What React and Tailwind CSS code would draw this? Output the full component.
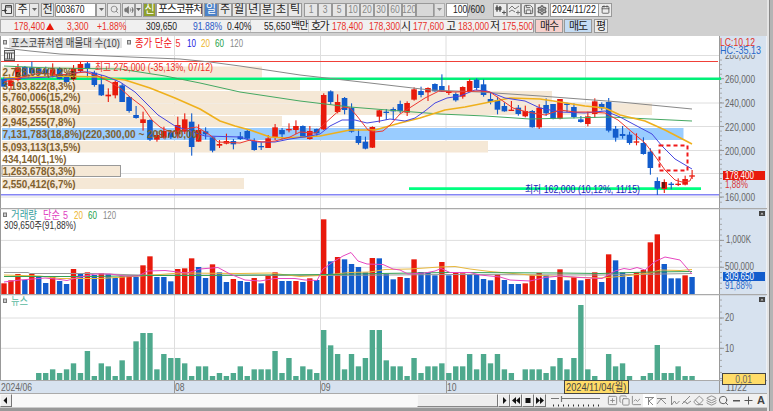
import { Search, Volume2, Settings, Save, Calendar, Copy, Layers, Eraser, SquarePlus, ChartLine } from "lucide-react";

const RED = "#e81a0c";
const BLUE = "#125ccc";
const GRID = "#dedede";

const barX = (i) => 4 + i * 6.95;

// [color, high, body top, body bottom, low] in thirds of a pixel below y=60
const candles = [
  ["b", 50, 57, 80, 80], ["r", 57, 62, 78, 90], ["r", 12, 22, 60, 64], ["b", 18, 21, 50, 55], ["b", 5, 22, 40, 42],
  ["b", 22, 25, 40, 45], ["b", 20, 28, 42, 45], ["r", 10, 28, 48, 52], ["b", 22, 25, 57, 58], ["b", 40, 45, 66, 68],
  ["r", 15, 24, 58, 62], ["r", 6, 12, 33, 36], ["b", 6, 10, 25, 52], ["b", 32, 38, 75, 80], ["b", 45, 73, 106, 108],
  ["r", 85, 104, 109, 126], ["r", 62, 66, 106, 115], ["b", 70, 76, 126, 126], ["b", 108, 111, 153, 158], ["b", 138, 165, 174, 176],
  ["r", 155, 178, 189, 212], ["b", 178, 180, 239, 243], ["r", 213, 225, 239, 245], ["r", 200, 213, 233, 236], ["b", 212, 217, 232, 237],
  ["r", 170, 195, 223, 235], ["r", 160, 178, 215, 222], ["b", 160, 185, 261, 287], ["r", 193, 210, 245, 245], ["b", 202, 214, 223, 238],
  ["b", 230, 232, 272, 277], ["r", 240, 252, 257, 264], ["r", 221, 243, 251, 253], ["b", 237, 243, 253, 268], ["b", 216, 229, 237, 240],
  ["b", 208, 213, 236, 240], ["b", 235, 243, 270, 272], ["b", 247, 258, 262, 270], ["r", 225, 235, 264, 264], ["r", 192, 202, 231, 240],
  ["b", 204, 210, 223, 238], ["r", 190, 207, 211, 217], ["r", 181, 198, 210, 222], ["b", 196, 198, 233, 233], ["r", 198, 213, 237, 239],
  ["b", 206, 207, 220, 228], ["r", 100, 105, 208, 210], ["b", 91, 94, 126, 134], ["r", 103, 126, 156, 160], ["b", 111, 114, 150, 163],
  ["b", 130, 143, 215, 218], ["b", 207, 228, 249, 254], ["b", 230, 245, 266, 268], ["r", 199, 201, 263, 264], ["r", 150, 151, 170, 188],
  ["b", 147, 155, 159, 180], ["b", 142, 147, 154, 180], ["b", 122, 132, 153, 160], ["r", 124, 129, 158, 168], ["r", 82, 88, 119, 122],
  ["b", 80, 93, 105, 112], ["r", 82, 84, 97, 123], ["b", 70, 72, 94, 95], ["b", 43, 78, 95, 96], ["r", 76, 95, 99, 105],
  ["b", 97, 102, 121, 125], ["r", 79, 81, 110, 116], ["r", 57, 63, 93, 95], ["b", 55, 59, 84, 90], ["b", 58, 73, 105, 110],
  ["b", 99, 117, 126, 133], ["b", 110, 120, 149, 163], ["b", 127, 138, 154, 155], ["r", 123, 149, 153, 153], ["b", 135, 143, 162, 167],
  ["r", 137, 153, 169, 172], ["b", 150, 153, 202, 203], ["r", 133, 143, 202, 207], ["b", 115, 135, 160, 168], ["b", 132, 132, 177, 178],
  ["r", 117, 117, 176, 178], ["b", 128, 131, 135, 156], ["b", 130, 141, 171, 175], ["b", 168, 178, 186, 188], ["r", 155, 169, 192, 199],
  ["r", 115, 124, 162, 173], ["b", 127, 132, 145, 151], ["b", 114, 126, 212, 217], ["b", 198, 207, 233, 245], ["b", 198, 222, 228, 236],
  ["b", 215, 224, 249, 254], ["r", 220, 244, 248, 256], ["b", 232, 249, 282, 284], ["b", 265, 275, 324, 344], ["b", 352, 363, 386, 405],
  ["r", 358, 366, 387, 399], ["b", 366, 371, 375, 388], ["r", 355, 371, 375, 378], ["r", 347, 357, 374, 376], ["r", 330, 346, 350, 357],
];

// bar tops in thirds of a pixel below y=200
const volume = [
  250, 241, 222, 240, 222, 231, 249, 231, 243, 252, 207, 222, 217, 225, 220, 222, 234, 229, 228, 231,
  196, 169, 231, 231, 244, 207, 205, 175, 201, 234, 193, 217, 246, 237, 243, 246, 234, 250, 227, 217,
  243, 243, 243, 246, 235, 240, 58, 184, 171, 178, 192, 201, 217, 174, 175, 222, 238, 231, 234, 178,
  216, 217, 226, 186, 226, 217, 220, 222, 222, 237, 241, 223, 240, 252, 252, 250, 226, 219, 226, 240,
  208, 241, 231, 241, 237, 217, 246, 163, 181, 217, 231, 217, 210, 127, 103, 192, 235, 235, 226, 231,
];
const volumeColors =
  "rrrbrbbrbbrbrbrbbrrbrrbbbrrrbbrbbrbbrbrrbbrbrbrbrbbbbrbbbrbrbbbrbrrbbbbrbbbrrrbbrbrbrrbrbbbrrrrbbbrb";

// bar tops in thirds of a pixel below y=300, 239 = no news
const news = [
  239, 239, 239, 239, 239, 219, 219, 208, 219, 208, 190, 219, 153, 228, 190, 199, 228, 181, 228, 124,
  99, 99, 208, 162, 174, 174, 190, 228, 199, 199, 228, 219, 228, 219, 199, 228, 208, 208, 208, 153,
  219, 174, 228, 199, 208, 219, 90, 136, 162, 208, 162, 199, 174, 90, 90, 181, 199, 199, 228, 174,
  219, 199, 199, 190, 219, 199, 199, 162, 208, 162, 190, 162, 208, 219, 239, 208, 208, 208, 219, 199,
  174, 208, 174, 15, 208, 228, 239, 162, 199, 190, 228, 239, 228, 219, 135, 219, 219, 199, 228, 228,
];

const profile = [
  { y: 66.5, h: 11, w: 260, fill: "#f5e8d6", label: "2,728,054(7,2%)", tw: 73 },
  { y: 80, h: 10, w: 298, fill: "#f5e8d6", label: "3,193,822(8,3%)", tw: 73 },
  { y: 91, h: 12, w: 550, fill: "#f5e8d6", label: "5,760,006(15,2%)", tw: 78 },
  { y: 103.5, h: 11.5, w: 650, fill: "#f5e8d6", label: "6,802,555(18,0%)", tw: 78 },
  { y: 116, h: 11, w: 280, fill: "#f5e8d6", label: "2,945,255(7,8%)", tw: 73 },
  { y: 128, h: 12, w: 681.5, fill: "#99ccff", label: "7,131,783(18,8%)(220,300,00 ~ 209,700,00)", tw: 198 },
  { y: 141, h: 11.5, w: 486, fill: "#f5e8d6", label: "5,093,113(13,5%)", tw: 78 },
  { y: 153, h: 11, w: 0, fill: "none", label: "434,140(1,1%)", tw: 64 },
  { y: 165.5, h: 11, w: 118.5, fill: "#f5e8d6", stroke: "#999", label: "1,263,678(3,3%)", tw: 73 },
  { y: 178, h: 11, w: 242, fill: "#f5e8d6", label: "2,550,412(6,7%)", tw: 73 },
];

const monthLines = [174.5, 320.5, 446, 585.5];

function Label({ x, y, w, fill = "#666", size = 11, bold, children }) {
  return (
    <text
      x={x}
      y={y}
      fill={fill}
      fontSize={size}
      fontWeight={bold ? 700 : 400}
      textLength={w}
      lengthAdjust="spacingAndGlyphs"
      style={{ whiteSpace: "pre" }}
    >
      {children}
    </text>
  );
}

function Line({ points, color, width = 1 }) {
  return <polyline points={points} fill="none" stroke={color} strokeWidth={width} strokeLinejoin="round" />;
}

function Marker({ x, y }) {
  return <rect x={x} y={y} width="3" height="3.5" fill="#ccc" stroke="#777" strokeWidth="1" />;
}

function Frame({ top, height }) {
  const bottom = top + height;
  return (
    <>
      <rect x="0" y={top} width="767" height={height} fill="#fff" />
      {monthLines.map((x) => (
        <line key={x} x1={x} x2={x} y1={top} y2={bottom} stroke={GRID} />
      ))}
      <rect x="719.5" y={top} width="47" height={height} fill="#d7e2ef" />
      <line x1="719.5" x2="719.5" y1={top} y2={bottom} stroke="#999" />
      <line x1="0.5" x2="0.5" y1={top} y2={bottom} stroke="#999" />
    </>
  );
}

function Ticks({ from, to, step }) {
  const ys = [];
  for (let y = from; y < to; y += step) ys.push(y);
  return ys.map((y) => <line key={y} x1="720" x2="722" y1={y} y2={y} stroke="#999" strokeWidth="0.8" />);
}

function PaneButton({ y }) {
  return (
    <g>
      <rect x="759" y={y} width="6" height="5" fill="#444" />
      <path d={`M760.5 ${y + 3.5}h3l-1.5-2z`} fill="#ccc" />
    </g>
  );
}

function PricePane() {
  const levels = [
    [78.7, "260,000"],
    [103, "240,000"],
    [126.5, "220,000"],
    [150.5, "200,000"],
    [173.5, "180,000"],
    [197, "160,000"],
  ];
  return (
    <svg className="block" width="767" height="172" viewBox="0 36 767 172">
      <Frame top={36} height={172} />
      <line x1="1" x2="719" y1="55.5" y2="55.5" stroke={GRID} />
      {levels.map(([y]) => (
        <line key={y} x1="1" x2="719" y1={y} y2={y} stroke={GRID} />
      ))}
      {profile.map((row) => (
        <rect key={row.y} x="2" y={row.y} width={row.w} height={row.h} fill={row.fill} stroke={row.stroke} />
      ))}
      <line x1="1" x2="718" y1="61.5" y2="61.5" stroke="#f04038" />
      <line x1="1" x2="721" y1="78.7" y2="78.7" stroke="#00f078" strokeWidth="2.6" />
      <line x1="409" x2="701" y1="188.6" y2="188.6" stroke="#00ff80" strokeWidth="2.6" />
      <line x1="1" x2="719" y1="194.8" y2="194.8" stroke="#8585f5" strokeWidth="1.5" />

      {candles.map(([c, high, top, bottom, low], i) => {
        const x = barX(i);
        const fill = c === "r" ? RED : BLUE;
        return (
          <g key={i} fill={fill}>
            <rect x={x - 0.5} y={60 + high / 3} width="1.1" height={(low - high) / 3} />
            <rect x={x - 2.8} y={60 + top / 3} width="5.6" height={Math.max(1.2, (bottom - top) / 3)} />
          </g>
        );
      })}
      <path d="M16 72h4v7h-4zM71 71h4v8h-4zM662 182h3v6h-3z" fill="#3a1410" opacity="0.75" />

      <Line color="#888" points="4,48 30,51 60,54 130,57 180,59 210,62 240,66 300,75 370,83 430,90 480,92 540,96 620,102 692,109" />
      <Line color="#45a862" points="4,66 50,68 120,69 165,76 200,83 240,92 300,101 350,107 400,111 440,114 485,116 530,119 570,118 610,117 650,119 692,121" />
      <Line color="#efb01c" width={1.6} points="4,78 60,76 100,77 125,80 150,88 175,98 200,109 220,121 235,126 250,130 270,137 285,138 320,136 350,130 375,130 400,123 420,118 445,110 465,107 480,104 510,98 540,99 560,102 585,106 605,108 620,115 645,121 665,130 692,144" />
      <Line color="#4646e0" points="4,79 50,77 80,72 90,72 105,76 120,82 135,92 145,102 158,115 175,126 190,131 205,136 240,137 255,142 275,142 290,139 310,136 320,134 330,126 342,120 355,120 367,123 380,121 390,119 405,121 415,118 425,111 435,103 447,98 460,96 475,90 487,91 505,98 525,101 540,108 560,112 585,113 605,111 620,117 635,125 652,134 662,146 675,159 692,169" />
      <Line color="#ee3830" points="4,82 18,78 40,73 60,75 85,72 98,76 110,82 120,88 130,97 143,107 152,120 160,127 170,132 180,131 190,128 197,127 210,135 218,142 240,143 250,140 262,142 275,141 290,137 300,132 316,133 322,126 333,116 343,107 350,108 357,116 368,130 375,132 383,131 390,125 400,114 411,107 425,98 439,91 455,92 480,91 490,92 500,99 513,108 527,112 545,115 560,110 575,112 590,112 605,113 618,120 632,132 645,143 655,156 665,170 675,180 682,182 690,181 692,176" />
      <rect x="659.5" y="145.5" width="28" height="25" fill="none" stroke="#f01818" strokeWidth="2" strokeDasharray="4 3" />

      {profile.map((row) => (
        <Label key={row.label} x={2.5} y={row.y + 9.5} w={row.tw} fill="#80602e" size={10.5} bold>
          {row.label}
        </Label>
      ))}

      <Label x={95} y={71} w={118} fill="#ee2a22" size={10.5}>최고 275,000 (-35,13%, 07/12)</Label>
      <Label x={525} y={192.5} w={115} fill="#1a1ab8" size={10.5}>최저 162,000 (10,12%, 11/15)</Label>

      <Marker x={3.5} y={40.5} />
      <rect x="9" y="38" width="113" height="10" fill="#e2e2e2" />
      <Label x={11} y={46.5} w={109} fill="#444">포스코퓨처엠 매물대 수(10)</Label>
      <Marker x={127.5} y={40.5} />
      <Label x={135} y={46.5} w={37} fill="#f01010">종가 단순</Label>
      <Label x={175.5} y={46.5} w={5} fill="#f03030">5</Label>
      <Label x={187} y={46.5} w={9} fill="#2020e0">10</Label>
      <Label x={201} y={46.5} w={9} fill="#eeb52a">20</Label>
      <Label x={215} y={46.5} w={9} fill="#22a048">60</Label>
      <Label x={230} y={46.5} w={13} fill="#888">120</Label>
      <g stroke="#555" fill="#e8e8e8">
        <rect x="4.5" y="50.5" width="10" height="10" />
        <path d="M5 53h9M7.5 53v6M9.5 53v6M11.5 53v6M5 59h9" fill="none" />
      </g>

      <Ticks from={60} to={206} step={4.74} />
      <Label x={725} y={59} w={30}>280,000</Label>
      {levels.map(([y, text]) => (
        <g key={text}>
          <line x1="720" x2="724" y1={y} y2={y} stroke="#999" />
          <Label x={725} y={y + 4} w={30}>{text}</Label>
        </g>
      ))}
      <line x1="719" x2="721" y1="78.7" y2="78.7" stroke="#00f078" strokeWidth="2.6" />
      <rect x="720" y="37" width="46" height="18" fill="#d7e2ef" />
      <Label x={720} y={45.5} w={35} fill="#e03028" size={10.5}>LC:10,12</Label>
      <Label x={720} y={54} w={41} fill="#2868c8" size={10.5}>HC:-35,13</Label>
      <rect x="723" y="171" width="42" height="9" fill={RED} />
      <Label x={725} y={179} w={29} fill="#fff" size={10.5}>178,400</Label>
      <Label x={725} y={188} w={23} fill="#d83838" size={10.5}>1,88%</Label>
    </svg>
  );
}

function VolumePane() {
  return (
    <svg className="block" width="767" height="86" viewBox="0 208 767 86">
      <Frame top={208} height={86} />
      <line x1="0" x2="767" y1="208.7" y2="208.7" stroke="#aaa" strokeWidth="1.3" />
      <line x1="1" x2="719" y1="240.4" y2="240.4" stroke={GRID} />
      <line x1="1" x2="719" y1="267.3" y2="267.3" stroke={GRID} />
      {volume.map((v, i) => (
        <rect
          key={i}
          x={barX(i) - 2.7}
          y={200 + v / 3}
          width="5.4"
          height={94 - v / 3}
          fill={volumeColors[i] === "r" ? RED : BLUE}
        />
      ))}
      <Line color="#999" points="4,272.5 28,272.5 30,273.5 90,273.5 140,275 320,275.5 450,274.5 600,275 692,273.5" />
      <Line color="#e8b83c" points="4,275 40,276 60,278.5 100,278.5 140,276 180,273 240,273.5 270,273 300,276.5 320,275.5 350,272.5 370,272 385,269.5 410,269 440,267 455,266.5 470,269 490,271.5 530,275 570,277 600,278 620,276.5 650,273 660,270 680,270.5 692,269.5" />
      <Line color="#35a055" points="4,276.5 90,276.5 150,275.5 200,275.5 260,275 330,274.5 380,273.5 450,272.5 560,273 600,273.5 650,272 692,271.5" />
      <Line color="#e648c0" points="4,282 20,280 45,278 60,279.5 67,280.5 80,277 95,274 110,274 125,276 138,276 148,271 165,270.5 178,272 187,273 200,269 218,267.5 230,274 245,280 260,281 275,278.5 295,278.5 305,280 317,280.5 323,269 333,262 343,256 351,252.5 358,261 367,264 383,264.5 393,269 400,270 408,274 425,273 435,271 441,268.5 450,272.5 470,272.5 480,275 500,277 510,280 530,281 545,277.5 560,276 580,277.5 602,278.5 615,271 624,268.5 630,269.5 637,267.5 645,270 655,261.5 665,257 680,260 692,274" />

      <Marker x={3.5} y={213} />
      <Label x={11} y={219} w={26} fill="#38a0a0">거래량</Label>
      <Label x={43} y={219} w={17} fill="#e040c0">단순</Label>
      <Label x={63} y={219} w={5} fill="#e040c0">5</Label>
      <Label x={74} y={219} w={9} fill="#eeb52a">20</Label>
      <Label x={88} y={219} w={9} fill="#22a048">60</Label>
      <Label x={103} y={219} w={13} fill="#888">120</Label>
      <Label x={4} y={228.5} w={72} fill="#333" size={10.5}>309,650주(91,88%)</Label>

      <Ticks from={219} to={293} step={5.35} />
      <line x1="720" x2="724" y1="240.4" y2="240.4" stroke="#999" />
      <line x1="720" x2="724" y1="267.3" y2="267.3" stroke="#999" />
      <Label x={726} y={243} w={25}>1,000K</Label>
      <Label x={725} y={270} w={29}>500,000</Label>
      <rect x="723" y="272" width="42" height="9" fill={BLUE} />
      <Label x={725} y={280} w={29} fill="#fff" size={10.5}>309,650</Label>
      <Label x={725} y={289} w={27} fill="#2868c8" size={10.5}>91,88%</Label>
      <PaneButton y={211} />
    </svg>
  );
}

function NewsPane() {
  return (
    <svg className="block" width="767" height="86" viewBox="0 294 767 86">
      <Frame top={294} height={86} />
      <line x1="0" x2="767" y1="294.5" y2="294.5" stroke="#aaa" strokeWidth="1.3" />
      <line x1="1" x2="719" y1="318" y2="318" stroke={GRID} />
      <line x1="1" x2="719" y1="348.3" y2="348.3" stroke={GRID} />
      {news.map((v, i) =>
        v < 239 ? (
          <rect key={i} x={barX(i) - 2.7} y={300 + v / 3} width="5.4" height={80 - v / 3} fill="#4ea98d" />
        ) : null
      )}
      <Marker x={3.5} y={299} />
      <Label x={11} y={305} w={17} fill="#58b8a0">뉴스</Label>
      <Ticks from={300} to={379} step={6.04} />
      <line x1="720" x2="724" y1="318" y2="318" stroke="#999" />
      <line x1="720" x2="724" y1="348.3" y2="348.3" stroke="#999" />
      <Label x={725} y={321} w={9}>20</Label>
      <Label x={725} y={352} w={9}>10</Label>
      <PaneButton y={297} />
    </svg>
  );
}

// Condensed text in a fixed-width slot
function Cond({ className = "", children }) {
  return (
    <span className={`block shrink-0 whitespace-nowrap ${className}`}>
      <span className="inline-block origin-left scale-x-[.78]">{children}</span>
    </span>
  );
}

function Key({ className = "", children }) {
  return (
    <span className={`flex h-[14px] shrink-0 items-center justify-center border border-[#999] text-[11px] leading-none ${className}`}>
      {children}
    </span>
  );
}

function Caret({ className = "" }) {
  return (
    <Key className={`bg-[#e9e9e9] ${className}`}>
      <svg width="5" height="3" viewBox="0 0 5 3"><path d="M0 0h5L2.5 3z" fill="#666" /></svg>
    </Key>
  );
}

function Toolbar() {
  return (
    <div className="flex h-[19px] items-center pl-px text-[#222]">
      <Key className="w-[13px] bg-[#e9e9e9]">
        <svg width="11" height="11" viewBox="0 0 11 11" fill="none" stroke="#444">
          <path d="M3.5 1.5h6v8h-6zM3.5 3h6" /><path d="M0 6.5h3" /><path d="M2.5 4.5v4l2.5-2z" fill="#333" stroke="none" />
        </svg>
      </Key>
      <Key className="ml-px w-[14px] border-r-0 bg-[#f4f4f4]">주</Key>
      <Caret className="w-[10px]" />
      <Key className="ml-[2px] w-[13px] bg-[#e9e9e9]">전</Key>
      <Key className="ml-px w-[41px] justify-start! bg-white">
        <Cond className="w-[28px]">003670</Cond>
      </Key>
      <Caret className="w-[10px]" />
      <Key className="ml-px w-[14px] bg-[#e9e9e9]"><Search size={9} color="#777" /></Key>
      <Key className="ml-px w-[13px] bg-[#e9e9e9]"><Volume2 size={10} color="#777" fill="#777" /></Key>
      <Caret className="w-[7px]" />
      <Key className="ml-px w-[13px] bg-[#8fa02c] text-white">신</Key>
      <Key className="w-[47px] justify-start! overflow-hidden bg-white">
        <span className="whitespace-nowrap pl-px tracking-[-1.3px]">포스코퓨처</span>
      </Key>
      <Key className="ml-px w-[14px] bg-[#4c82c8] text-white">일</Key>
      {["주", "월", "년", "분", "초", "틱"].map((t) => (
        <Key key={t} className="w-[14px] bg-[#e9e9e9]">{t}</Key>
      ))}
      <div className="ml-[2px] flex text-[#888]">
        {["1", "3", "5", "10", "20", "30", "60", "120"].map((t) => (
          <Key key={t} className="w-[14px] bg-[#e6e6e6]">
            <span className="inline-block scale-x-[.78]">{t}</span>
          </Key>
        ))}
      </div>
      <Key className="w-[18px] bg-[#d8d8d8]" />
      <Caret className="w-[11px] opacity-60" />
      <Key className="ml-px w-[22px] justify-end! bg-white"><span className="inline-block origin-right scale-x-[.78]">100</span></Key>
      <Cond className="w-[25px] text-[11px] leading-none">/600</Cond>
      <Key className="w-[14px] bg-[#ececec]">
        <svg width="11" height="11" viewBox="0 0 11 11" stroke="#555"><path d="M2 1v7M5 2v6M7 8.5h4M9 6.5v4" /><path d="M1 3h2v3H1zM4 3h2v3H4z" fill="#555" /></svg>
      </Key>
      <Key className="w-[14px] bg-[#ececec]">
        <svg width="11" height="11" viewBox="0 0 11 11" fill="none" stroke="#777"><path d="M0 5l3-3 3 3 4-3M0 8l3-2 3 2M7 8.5h4M9 6.5v4" /></svg>
      </Key>
      <Key className="w-[14px] bg-[#ececec]"><Save size={11} color="#555" /></Key>
      <Key className="w-[14px] bg-[#ececec]"><Settings size={10} color="#666" strokeWidth={3.5} /></Key>
      <Key className="ml-px w-[49px] justify-start! bg-white pl-px">
        <span className="inline-block origin-left scale-x-[.81] whitespace-nowrap">2024/11/22</span>
      </Key>
      <Key className="w-[13px] border-l-0 bg-[#ececec]"><Calendar size={9} color="#444" /></Key>
    </div>
  );
}

function QuoteBar() {
  return (
    <div className="flex h-[14px] w-[608px] items-center border border-r-0 border-[#aaa] bg-[#f0f0f0] text-[11px] leading-none text-[#222]">
      <div className="flex h-full w-[125px] items-center border-r border-[#ccc] pl-[13px] text-[#e83028]">
        <Cond className="w-[32px]">178,400</Cond>
        <svg className="mr-[13px]" width="8" height="7" viewBox="0 0 8 7"><path d="M4 0l4 7H0z" fill="#e81a0c" /></svg>
        <Cond className="w-[30px]">3,300</Cond>
        <Cond className="w-[28px]">+1.88%</Cond>
      </div>
      <div className="flex h-full w-[125px] items-center border-r border-[#ccc] pl-[20px]">
        <Cond className="w-[47px]">309,650</Cond>
        <Cond className="w-[34px] text-[#2858c8]">91.88%</Cond>
        <Cond className="w-[24px]">0.40%</Cond>
      </div>
      <div className="flex h-full w-[59px] items-center border-r border-[#ccc] pl-[13px]">
        <Cond className="w-[27px]">55,650</Cond>
        <span className="whitespace-nowrap text-[10px] tracking-[-1px]">백만</span>
      </div>
      <div className="flex h-full w-[92px] items-center border-r border-[#ccc] pl-[2px] text-[#e83028]">
        <span className="w-[21px] whitespace-nowrap text-[#222] tracking-[-1.5px]">호가</span>
        <Cond className="w-[37px]">178,400</Cond>
        <Cond className="w-[31px]">178,300</Cond>
      </div>
      <div className="flex h-full w-[133px] items-center border-r border-[#999] text-[#e83028]">
        <span className="w-[12px] text-[#222]">시</span>
        <Cond className="w-[33px]">177,600</Cond>
        <span className="w-[12px] text-[#222]">고</span>
        <Cond className="w-[32px]">183,000</Cond>
        <span className="w-[12px] text-[#222]">저</span>
        <Cond className="w-[31px]">175,500</Cond>
      </div>
      <div className="-my-px flex h-[14px] flex-1 gap-px bg-[#d0d0d0] pl-px">
        <Key className="w-[28px] bg-[#f6d0cc] tracking-[-1px]">매수</Key>
        <Key className="w-[28px] bg-[#c4dcf4] tracking-[-1px]">매도</Key>
        <Key className="ml-px w-[14px] bg-[#ececec]">평</Key>
      </div>
    </div>
  );
}

function TimeAxis() {
  return (
    <div className="relative flex h-[14px] w-[767px] border-y border-[#aaa] bg-[#d7e2ef] text-[11px] leading-[12px] text-[#666]">
      <Cond className="w-[174px] pl-px">2024/06</Cond>
      <Cond className="w-[146px] border-l border-[#999]">08</Cond>
      <Cond className="w-[126px] border-l border-[#999]">09</Cond>
      <Cond className="w-[273px] border-l border-[#999]">10</Cond>
      <Cond className="w-[46px] border-l border-[#999] pl-[6px]">11/22</Cond>
      <div className="absolute -top-px left-[564px] h-[14px] w-[65px] border border-[#444] bg-[#ffdc68] pl-px text-[#444]">
        <span className="inline-block origin-left scale-x-[.84] whitespace-nowrap">2024/11/04(월)</span>
      </div>
      <div className="absolute -top-[8px] left-[722px] flex h-[12px] w-[44px] items-center justify-center border border-[#444] bg-[#ffdc68]">
        <span className="inline-block scale-x-[.78]">0,01</span>
      </div>
    </div>
  );
}

function PlayKey({ d }) {
  return (
    <span className="flex h-[13px] w-3 shrink-0 items-center justify-center border border-[#f8f8f8] border-r-[#777] border-b-[#777] bg-[#eee]">
      <svg width="8" height="7" viewBox="0 0 8 7"><path d={d} fill="#111" /></svg>
    </span>
  );
}

function Tool({ active, children }) {
  return (
    <span className={`flex h-[13px] w-[12.4px] shrink-0 items-center justify-center ${active ? "bg-white" : ""}`}>
      {children}
    </span>
  );
}

function Stroke({ d, active, color = "#888" }) {
  return (
    <Tool active={active}>
      <svg width="11" height="11" viewBox="0 0 11 11"><path d={d} fill="none" stroke={color} /></svg>
    </Tool>
  );
}

function BottomBar() {
  const icon = { size: 11, color: "#888", className: "shrink-0" };
  return (
    <div className="flex h-[13px] w-[767px] items-center bg-[#f0f0f0]">
      <PlayKey d="M5 0v7L1.5 3.5z" />
      <div className="flex h-[13px] w-[486px] shrink-0 justify-end bg-[#f9f9f9]">
        <span className="h-[13px] w-[81px] border border-[#f8f8f8] border-r-[#777] border-b-[#888] bg-[#eee]" />
      </div>
      <PlayKey d="M3 0v7L6.5 3.5z" />
      <PlayKey d="M4 0v7L0 3.5zM8 0v7L4 3.5z" />
      <PlayKey d="M1.5 1h5v5h-5z" />
      <PlayKey d="M0 0v7l4-3.5zM4 0v7l4-3.5z" />
      <svg className="ml-[4px] shrink-0" width="54" height="13" viewBox="0 0 54 13" stroke="#777">
        <path d="M1 4.5h8M12 4.5h38M11.5 2v6" fill="none" strokeWidth="1.2" />
        <path d="M3 11.5h49" strokeDasharray="1 4" strokeWidth="2" stroke="#333" />
      </svg>
      <div className="ml-[2px] flex shrink-0 items-center">
        <Tool><SquarePlus {...icon} /></Tool>
        <Tool><Copy {...icon} /></Tool>
        <Tool><ChartLine {...icon} /></Tool>
        <Stroke active d="M1 2.5h9M4.5 2v8M9 3L5 6l4 4" />
        <Stroke d="M1 3.5h9M1 9l4-5 5 5" />
        <Stroke d="M2.5 1v9l3-4 2 3 3-3" />
        <Stroke d="M1 9l8-8M2 7h3l1 2 4-3" />
        <Tool><Eraser {...icon} /></Tool>
        <Tool><Layers {...icon} /></Tool>
        <Tool><Search {...icon} color="#555" /></Tool>
        <Stroke color="#555" d="M2 5.5h7M2 6h7" />
        <Stroke color="#555" d="M1.5 5.5h8M5.5 1.5v8" />
        <Tool><span className="text-[11px] font-bold leading-none text-[#444]">A</span></Tool>
      </div>
    </div>
  );
}

export default function App() {
  return (
    <div className="flex h-[411px] w-[773px] overflow-hidden bg-[#d0d0d0] font-['Liberation_Sans','Noto_Sans_CJK_KR',sans-serif]">
      <div className="flex w-[767px] shrink-0 flex-col">
        <Toolbar />
        <div className="h-[17px]"><QuoteBar /></div>
        <PricePane />
        <VolumePane />
        <NewsPane />
        <TimeAxis />
        <BottomBar />
        <div className="h-[4px] border-t border-[#ccc] bg-[#999]" />
      </div>
      <div className="w-[2px] bg-[#e4e4e4]" />
      <div className="w-[4px] border-l border-[#888] bg-[#b4b4b4]" />
    </div>
  );
}
